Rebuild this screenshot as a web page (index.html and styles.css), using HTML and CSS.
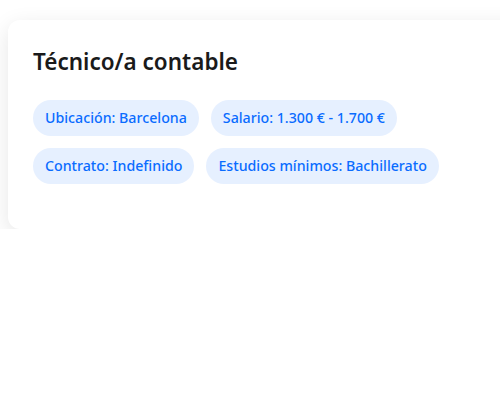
FILE: index.html
```html
<!DOCTYPE html>
<html lang="es">
<head>
<meta charset="utf-8">
<link rel="stylesheet" href="styles.css">
</head>
<body>
<div class="card">
  <h2 class="title">Técnico/a contable</h2>
  <div class="chips">
    <span class="chip">Ubicación: Barcelona</span>
    <span class="chip">Salario: 1.300 € - 1.700 €</span>
    <span class="chip">Contrato: Indefinido</span>
    <span class="chip">Estudios mínimos: Bachillerato</span>
  </div>
</div>
</body>
</html>
```
FILE: styles.css
```css
html, body {
  margin: 0;
  background: #ffffff;
}
body {
  padding: 20px 0 0 8px;
  font-family: "Noto Sans", "Open Sans", sans-serif;
  overflow: hidden;
}
.card {
  width: 560px;
  box-sizing: border-box;
  background: #ffffff;
  border-radius: 12px;
  box-shadow: 0 6px 22px rgba(0, 0, 0, 0.1);
  padding: 26px 25px 45px;
}
.title {
  margin: 0 0 22px;
  font-size: 22.5px;
  line-height: 32px;
  font-weight: 600;
  color: #1a1a1a;
}
.chips {
  display: flex;
  flex-wrap: wrap;
  gap: 12px;
  max-width: 430px;
}
.chip {
  display: inline-block;
  background: #e6f0ff;
  color: #0a6cff;
  font-size: 14.2px;
  font-weight: 500;
  line-height: 36px;
  padding: 0 12px;
  border-radius: 18px;
}
```
